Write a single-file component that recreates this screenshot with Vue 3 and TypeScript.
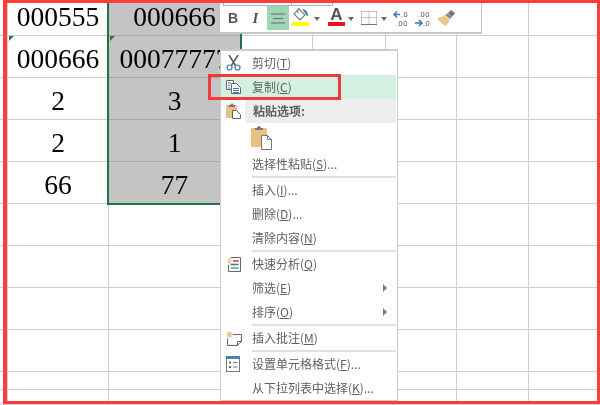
<script setup lang="ts">
interface Cell { text?: string; sel?: boolean; mark?: boolean }
interface MenuRow {
  kind: 'item' | 'sep' | 'head' | 'paste'
  label?: string
  key?: string
  tail?: string
  icon?: string
  arrow?: boolean
  hover?: boolean
}

const colWidths = [8, 101, 132, 72, 73, 71, 72, 71]
const rowHeights = [36, 42, 42, 42, 42, 42, 42, 42, 42, 18, 15]

const data: Record<number, Record<number, string>> = {
  0: { 1: '000555', 2: '000666' },
  1: { 1: '000666', 2: '00077777' },
  2: { 1: '2', 2: '3' },
  3: { 1: '2', 2: '1' },
  4: { 1: '66', 2: '77' },
}

const cells: (Cell & { id: string })[] = []
rowHeights.forEach((_, r) => {
  colWidths.forEach((__, c) => {
    cells.push({
      id: `${r}-${c}`,
      text: data[r]?.[c],
      sel: c === 2 && r < 5,
      mark: r === 1 && (c === 1 || c === 2),
    })
  })
})

const gridStyle = {
  gridTemplateColumns: colWidths.map((w) => `${w}px`).join(' '),
  gridTemplateRows: rowHeights.map((h) => `${h}px`).join(' '),
}

const menu: MenuRow[] = [
  { kind: 'item', label: '剪切(', key: 'T', tail: ')', icon: 'cut' },
  { kind: 'item', label: '复制(', key: 'C', tail: ')', icon: 'copy', hover: true },
  { kind: 'head', label: '粘贴选项:', icon: 'paste' },
  { kind: 'paste' },
  { kind: 'item', label: '选择性粘贴(', key: 'S', tail: ')...' },
  { kind: 'sep' },
  { kind: 'item', label: '插入(', key: 'I', tail: ')...' },
  { kind: 'item', label: '删除(', key: 'D', tail: ')...' },
  { kind: 'item', label: '清除内容(', key: 'N', tail: ')' },
  { kind: 'sep' },
  { kind: 'item', label: '快速分析(', key: 'Q', tail: ')', icon: 'quick' },
  { kind: 'item', label: '筛选(', key: 'E', tail: ')', arrow: true },
  { kind: 'item', label: '排序(', key: 'O', tail: ')', arrow: true },
  { kind: 'sep' },
  { kind: 'item', label: '插入批注(', key: 'M', tail: ')', icon: 'note' },
  { kind: 'sep' },
  { kind: 'item', label: '设置单元格格式(', key: 'F', tail: ')...', icon: 'format' },
  { kind: 'item', label: '从下拉列表中选择(', key: 'K', tail: ')...' },
]
</script>

<template>
  <div class="page">
    <div class="sheet" :style="gridStyle">
      <div v-for="c in cells" :key="c.id" class="cell" :class="{ sel: c.sel }">
        <span v-if="c.mark" class="mark"></span>
        <span v-if="c.text" class="num">{{ c.text }}</span>
      </div>
    </div>

    <div class="selection"></div>

    <div class="toolbar">
      <div class="combos"><span class="combo wide"></span><span class="combo"></span></div>
      <div class="tools">
        <span class="tool bold">B</span>
        <span class="tool italic">I</span>
        <span class="tool align">
          <svg width="14" height="11" viewBox="0 0 14 11"><path d="M0 1h14M2 5.500h10M0 10h14" stroke="#6a6a6a" stroke-width="1.100" fill="none" /></svg>
        </span>
        <span class="tool color fill">
          <svg width="17" height="15" viewBox="0 0 17 15">
            <path d="M7 2l6 6-5 5-6-6z" fill="#fff" stroke="#777" stroke-width="1.100" />
            <path d="M7 2C5 1 5 3 6 6" fill="none" stroke="#777" />
            <path d="M10 2c4 0 6 3 6 7-2 0-2-2-3-3z" fill="#4a80b5" />
          </svg>
          <i class="bar yellow"></i>
        </span>
        <span class="caret c1"></span>
        <span class="tool color letter">A<i class="bar crimson"></i></span>
        <span class="caret c2"></span>
        <span class="tool borders">
          <svg width="16" height="14" viewBox="0 0 16 14">
            <path d="M.5.500h15M.5 6.500h15M.5.500v13M8 .5v13M15.500.5v13" stroke="#8c8c8c" stroke-dasharray="1 1" fill="none" />
            <path d="M0 13.500h16" stroke="#777" fill="none" />
          </svg>
        </span>
        <span class="caret c3"></span>
        <svg class="dec" width="17" height="18" viewBox="0 0 17 18">
          <path d="M8 5.500H2M5 2.500l-3 3 3 3" stroke="#3f78ad" stroke-width="1.500" fill="none" />
          <text x="9" y="8" class="dectext">.0</text>
          <text x="4" y="16.500" class="dectext">.00</text>
        </svg>
        <svg class="dec" width="17" height="18" viewBox="0 0 17 18">
          <text x="4" y="8" class="dectext">.00</text>
          <path d="M1 14h6M5 11l3 3-3 3" stroke="#3f78ad" stroke-width="1.500" fill="none" />
          <text x="9" y="16.500" class="dectext">.0</text>
        </svg>
        <svg class="brush" width="20" height="18" viewBox="0 0 20 18">
          <path d="M12 4l3-3 4 3-3 4z" fill="#777" />
          <path d="M9 6l3-2 4 4-2 2z" fill="#8a8a8a" />
          <path d="M8 6l6 5-4 6c-3-1-7-5-9-8 3 0 5-1 7-3z" fill="#eec58c" />
        </svg>
      </div>
    </div>

    <div class="menu">
      <template v-for="(row, i) in menu" :key="i">
        <div v-if="row.kind === 'sep'" class="sep"></div>
        <div v-else-if="row.kind === 'paste'" class="paste-row">
          <svg width="21" height="24" viewBox="0 0 21 24">
            <rect x="0" y="2" width="16" height="19" rx="1" fill="#e9c183" />
            <path d="M4 4V2h2c0-2.500 4-2.500 4 0h2v2z" fill="#777" />
            <path d="M10.500 9.500h6l4 4v10h-10z" fill="#fff" stroke="#777" />
            <path d="M16.500 9.500v4h4" fill="none" stroke="#777" />
          </svg>
        </div>
        <div v-else class="row" :class="{ hover: row.hover, head: row.kind === 'head' }">
          <span class="ico">
            <svg v-if="row.icon === 'cut'" width="15" height="16" viewBox="0 0 15 16">
              <path d="M3 0l6.500 10.500M12 0L5.500 10.500" stroke="#5f5f5f" stroke-width="1.600" fill="none" />
              <circle cx="3.500" cy="12.500" r="2.500" fill="none" stroke="#3f78ad" stroke-width="1.200" />
              <circle cx="11.500" cy="12.500" r="2.500" fill="none" stroke="#3f78ad" stroke-width="1.200" />
            </svg>
            <svg v-else-if="row.icon === 'copy'" width="15" height="14" viewBox="0 0 15 14">
              <path d="M.5.500h7v9h-7z" fill="#fff" stroke="#666" />
              <path d="M5.500 3.500h5l4 4v6h-9z" fill="#fff" stroke="#666" />
              <path d="M2 3h3M2 5.500h2M2 8h2M7 8.500h6M7 10.500h6M7 12.500h6" stroke="#3f78ad" fill="none" />
            </svg>
            <svg v-else-if="row.icon === 'paste'" width="15" height="16" viewBox="0 0 15 16">
              <rect x="0" y="2" width="11" height="13" fill="#e9c183" />
              <path d="M3 4V2h1.500c0-2 3-2 3 0H9v2z" fill="#777" />
              <path d="M6.500 7.500h4l4 4v4h-8z" fill="#fff" stroke="#666" />
            </svg>
            <svg v-else-if="row.icon === 'quick'" width="15" height="15" viewBox="0 0 15 15">
              <path d="M5 .5h9.500v14h-12V8" fill="#fff" stroke="#666" />
              <path d="M4 0L1 5h2L1.500 9 6 3.500H4l1-3.500z" fill="#f0c27c" />
              <path d="M7 4h5.500" stroke="#d0433a" stroke-width="1.600" />
              <path d="M4.500 7.500h8" stroke="#3f78ad" stroke-width="1.600" />
              <path d="M5 11h7.500" stroke="#5fa88b" stroke-width="1.600" />
            </svg>
            <svg v-else-if="row.icon === 'note'" width="16" height="15" viewBox="0 0 16 15">
              <path d="M6 3.500h9.500v7l-4 4h-10v-7" fill="#fff" stroke="#666" />
              <path d="M11.500 14.500v-4h4" fill="none" stroke="#666" />
              <path d="M3.500 0v7M0 3.500h7M1 1l5 5M6 1L1 6" stroke="#eec58c" stroke-width="1.100" />
            </svg>
            <svg v-else-if="row.icon === 'format'" width="14" height="16" viewBox="0 0 14 16">
              <rect x=".5" y=".5" width="13" height="15" fill="#fff" stroke="#777" />
              <rect x="0" y="0" width="14" height="3" fill="#4a7fb4" />
              <path d="M3 6.500h2M3 11h2" stroke="#666" stroke-width="2" />
              <path d="M7 6.500h4.500M7 11h4.500" stroke="#777" />
            </svg>
          </span>
          <span class="label">{{ row.label }}<u v-if="row.key">{{ row.key }}</u>{{ row.tail }}</span>
          <span v-if="row.arrow" class="arrow"></span>
        </div>
      </template>
    </div>

    <div class="red frame"></div>
    <div class="red callout"></div>
  </div>
</template>

<style scoped>
.page {
  position: relative;
  width: 600px;
  height: 405px;
  overflow: hidden;
  background: #fff;
  font-family: "Noto Sans CJK SC", "Liberation Sans", sans-serif;
  filter: blur(0.3px);
}
.sheet {
  display: grid;
}
.cell {
  position: relative;
  box-sizing: border-box;
  display: flex;
  justify-content: center;
  align-items: flex-end;
  border-right: 1px solid #cfcfcf;
  border-bottom: 1px solid #cfcfcf;
  white-space: nowrap;
  min-width: 0;
}
.cell.sel {
  background: #c4c4c4;
  border-right-color: #c4c4c4;
  border-bottom-color: #a6a6a6;
}
.num {
  font-family: "Liberation Serif", serif;
  font-size: 27.500px;
  line-height: 32px;
  color: #000;
  padding-bottom: 2px;
}
.mark {
  position: absolute;
  left: 1px;
  top: 0;
  width: 0;
  height: 0;
  border-top: 5px solid #1e7b34;
  border-right: 5px solid transparent;
}
.selection {
  position: absolute;
  left: 107px;
  top: 0;
  width: 135px;
  height: 205px;
  box-sizing: border-box;
  border: 2px solid #217346;
  border-top: 0;
}
.toolbar {
  position: absolute;
  left: 220px;
  top: 3px;
  width: 262px;
  height: 31px;
  box-sizing: border-box;
  background: #fff;
  border-right: 1px solid #c6c6c6;
  border-bottom: 2px solid #c6c6c6;
}
.combos {
  display: flex;
  margin-left: 3px;
  height: 3px;
}
.combo {
  box-sizing: border-box;
  width: 42px;
  border: 1px solid #b5b5b5;
  border-top: 0;
}
.combo.wide {
  width: 68px;
  border-right: 0;
}
.tools {
  display: flex;
  align-items: center;
  height: 24px;
}
.tool {
  position: relative;
  display: flex;
  align-items: center;
  justify-content: center;
  box-sizing: border-box;
  height: 24px;
  color: #555;
}
.bold {
  width: 24px;
  margin-left: 1px;
  font: bold 14px "Liberation Sans", sans-serif;
}
.italic {
  width: 21px;
  font: italic bold 15px "Liberation Serif", serif;
}
.align {
  width: 22px;
  margin-left: 1px;
  background: #9fd5b7;
}
.color {
  width: 17px;
  align-items: flex-start;
}
.fill {
  margin-left: 3px;
  padding-top: 1px;
}
.letter {
  margin-left: 8px;
  font: bold 17px/18px "Liberation Sans", sans-serif;
  color: #555;
}
.bar {
  position: absolute;
  left: 0;
  right: 0;
  top: 16px;
  height: 4px;
}
.yellow {
  background: #ffff00;
}
.crimson {
  background: #e8171f;
}
.caret {
  width: 0;
  height: 0;
  margin-top: 1px;
  border-left: 3.500px solid transparent;
  border-right: 3.500px solid transparent;
  border-top: 4px solid #666;
}
.c1 {
  margin-left: 5px;
}
.c2 {
  margin-left: 3px;
}
.c3 {
  margin-left: 4px;
}
.borders {
  width: 16px;
  margin-left: 7px;
}
.dec {
  margin-left: 5px;
}
.dectext {
  font: 7.500px "Liberation Sans", sans-serif;
  letter-spacing: 0.5px;
  fill: #555;
}
.brush {
  margin-left: 5px;
}
.menu {
  position: absolute;
  left: 220px;
  top: 49px;
  width: 178px;
  height: 353px;
  box-sizing: border-box;
  background: #fff;
  border: 2px solid #cbcbcb;
  border-right-width: 1px;
  border-left-width: 1px;
  display: flex;
  flex-direction: column;
}
.row {
  position: relative;
  display: flex;
  align-items: center;
  flex: none;
  height: 24px;
  margin-right: 1px;
  color: #606060;
  font-size: 12px;
}
.row.hover {
  background: #d3f0e0;
}
.row.head {
  font-weight: 700;
  color: #5c5c5c;
  background: linear-gradient(to right, #fff 24px, #eeeeee 24px);
}
.ico {
  flex: none;
  width: 31px;
  height: 24px;
  box-sizing: border-box;
  padding-left: 5px;
  display: flex;
  align-items: center;
}
.label {
  white-space: nowrap;
  line-height: 24px;
}
.head .label {
  padding-left: 1px;
}
.arrow {
  position: absolute;
  right: 9px;
  top: 8px;
  width: 0;
  height: 0;
  border-left: 4px solid #7a7a7a;
  border-top: 4px solid transparent;
  border-bottom: 4px solid transparent;
}
.paste-row {
  flex: none;
  height: 29px;
  padding: 3px 0 0 30px;
  box-sizing: border-box;
}
.sep {
  flex: none;
  height: 2px;
  margin-left: 31px;
  margin-right: 1px;
  background: #e1e1e1;
}
.frame {
  position: absolute;
  left: 3px;
  top: 0;
  right: 0;
  height: 404px;
  box-sizing: border-box;
  border: solid #ff3b3b;
  border-width: 3px 3px 3px 4px;
}
.callout {
  position: absolute;
  left: 208px;
  top: 74px;
  width: 133px;
  height: 26px;
  box-sizing: border-box;
  border: 3px solid #ef3b3b;
}
</style>
